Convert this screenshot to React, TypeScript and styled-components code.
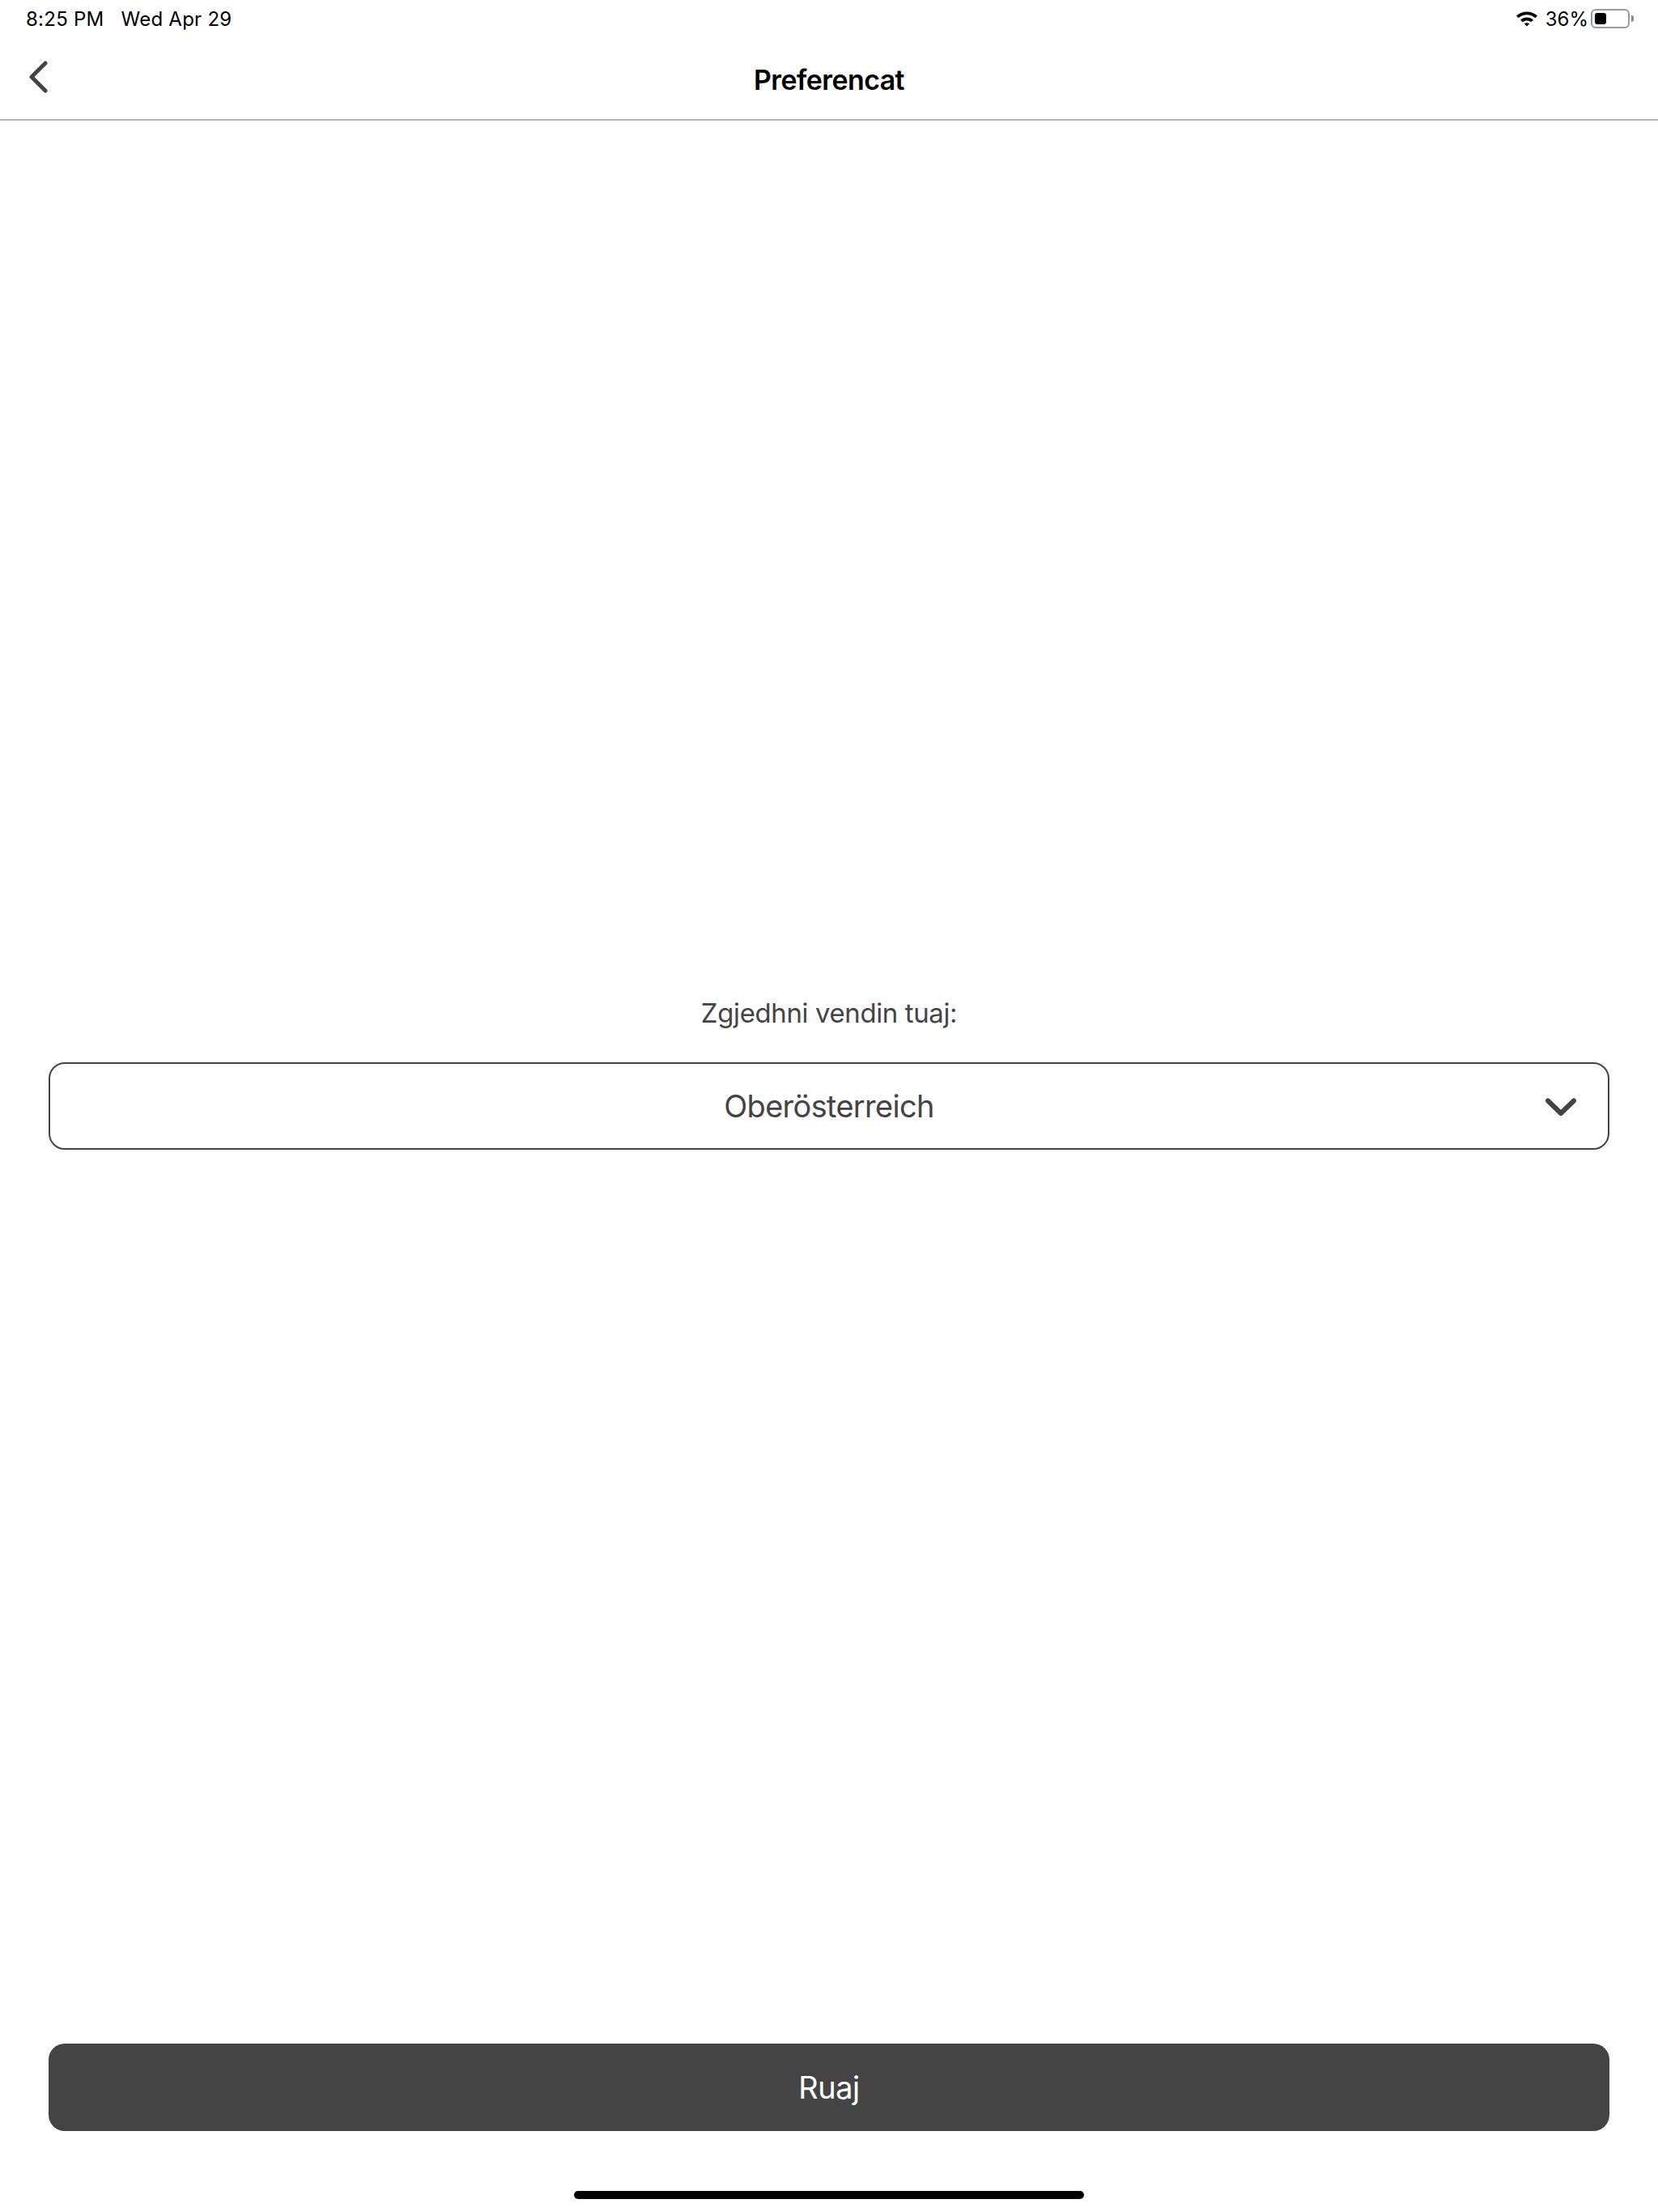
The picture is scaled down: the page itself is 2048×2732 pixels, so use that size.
import styled, { createGlobalStyle } from 'styled-components';

const GlobalStyle = createGlobalStyle`
  html, body {
    margin: 0;
    padding: 0;
    background: #fff;
    font-family: Inter, "Liberation Sans", sans-serif;
  }
`;

const App = () => {
  return (
    <Screen>
      <GlobalStyle />
      <StatusBar>
        <StatusLeft>
          <span>8:25 PM</span>
          <span>Wed Apr 29</span>
        </StatusLeft>
        <StatusRight>
          <svg width="28" height="22" viewBox="0 0 28 22">
            <path d="M1 7.5C8.5 0.8 19.5 0.8 27 7.5L24.4 10.2C18.3 5 9.7 5 3.6 10.2Z" fill="#000" />
            <path d="M6 12.5C10.8 8.6 17.2 8.6 22 12.5L19.4 15.2C16.2 12.8 11.8 12.8 8.6 15.2Z" fill="#000" />
            <path d="M10.8 17.2C12.8 15.8 15.2 15.8 17.2 17.2L14 20.6Z" fill="#000" />
          </svg>
          <Percent>36%</Percent>
          <Battery>
            <BatteryFill />
          </Battery>
          <BatteryTip />
        </StatusRight>
      </StatusBar>
      <NavBar>
        <BackButton>
          <svg width="26" height="40" viewBox="0 0 26 40">
            <path d="M22 3L5 20L22 37" fill="none" stroke="#444" strokeWidth="5" strokeLinecap="round" strokeLinejoin="round" />
          </svg>
        </BackButton>
        <Title>Preferencat</Title>
      </NavBar>
      <Content>
        <Label>Zgjedhni vendin tuaj:</Label>
        <Select>
          <SelectValue>Oberösterreich</SelectValue>
          <SelectArrow>
            <svg width="40" height="26" viewBox="0 0 40 26">
              <path d="M4 4.5L20 20L36 4.5" fill="none" stroke="#444" strokeWidth="6" strokeLinecap="round" strokeLinejoin="round" />
            </svg>
          </SelectArrow>
        </Select>
      </Content>
      <Footer>
        <SaveButton>Ruaj</SaveButton>
      </Footer>
      <HomeBar>
        <HomeIndicator />
      </HomeBar>
    </Screen>
  );
};

const Screen = styled.div`
  display: flex;
  flex-direction: column;
  width: 2048px;
  height: 2732px;
  background: #fff;
  overflow: hidden;
`;

const StatusBar = styled.div`
  display: flex;
  justify-content: space-between;
  align-items: center;
  box-sizing: border-box;
  height: 48px;
  padding: 0 30px 2px 32px;
  font-size: 24px;
  color: #000;
`;

const StatusLeft = styled.div`
  display: flex;
  gap: 21px;
  letter-spacing: 0.25px;
`;

const StatusRight = styled.div`
  display: flex;
  align-items: center;
`;

const Percent = styled.span`
  margin-left: 9px;
`;

const Battery = styled.div`
  box-sizing: border-box;
  width: 48px;
  height: 24px;
  margin-left: 3px;
  padding: 3px;
  border: 2px solid #9a9a9a;
  border-radius: 6px;
`;

const BatteryFill = styled.div`
  width: 14px;
  height: 100%;
  background: #000;
  border-radius: 3px;
`;

const BatteryTip = styled.div`
  width: 3px;
  height: 8px;
  margin-left: 2px;
  background: #8a8a8a;
  border-radius: 0 3px 3px 0;
`;

const NavBar = styled.div`
  position: relative;
  display: flex;
  justify-content: center;
  align-items: center;
  box-sizing: border-box;
  height: 101px;
  padding-top: 1px;
  border-bottom: 2px solid #b4b4b4;
`;

const BackButton = styled.div`
  position: absolute;
  left: 34px;
  top: 27px;
  display: flex;
`;

const Title = styled.div`
  font-size: 34px;
  font-weight: 600;
  letter-spacing: -0.6px;
  color: #000;
`;

const Content = styled.div`
  flex: 1;
  display: flex;
  flex-direction: column;
  align-items: center;
  justify-content: center;
  padding: 0 60px 23px;
`;

const Label = styled.div`
  margin-bottom: 40px;
  font-size: 33px;
  line-height: 42px;
  letter-spacing: -0.4px;
  color: #444;
`;

const Select = styled.div`
  position: relative;
  display: flex;
  justify-content: center;
  align-items: center;
  box-sizing: border-box;
  width: 100%;
  height: 108px;
  border: 2px solid #444;
  border-radius: 20px;
`;

const SelectValue = styled.div`
  font-size: 38px;
  letter-spacing: -0.7px;
  color: #444;
`;

const SelectArrow = styled.div`
  position: absolute;
  right: 38px;
  top: 41px;
  display: flex;
`;

const Footer = styled.div`
  padding: 0 60px;
`;

const SaveButton = styled.div`
  display: flex;
  justify-content: center;
  align-items: center;
  height: 108px;
  background: #444;
  border-radius: 20px;
  font-size: 38px;
  letter-spacing: -0.5px;
  color: #fff;
`;

const HomeBar = styled.div`
  display: flex;
  justify-content: center;
  box-sizing: border-box;
  height: 100px;
  padding-top: 74px;
`;

const HomeIndicator = styled.div`
  width: 630px;
  height: 10px;
  background: #000;
  border-radius: 5px;
`;

export default App;
